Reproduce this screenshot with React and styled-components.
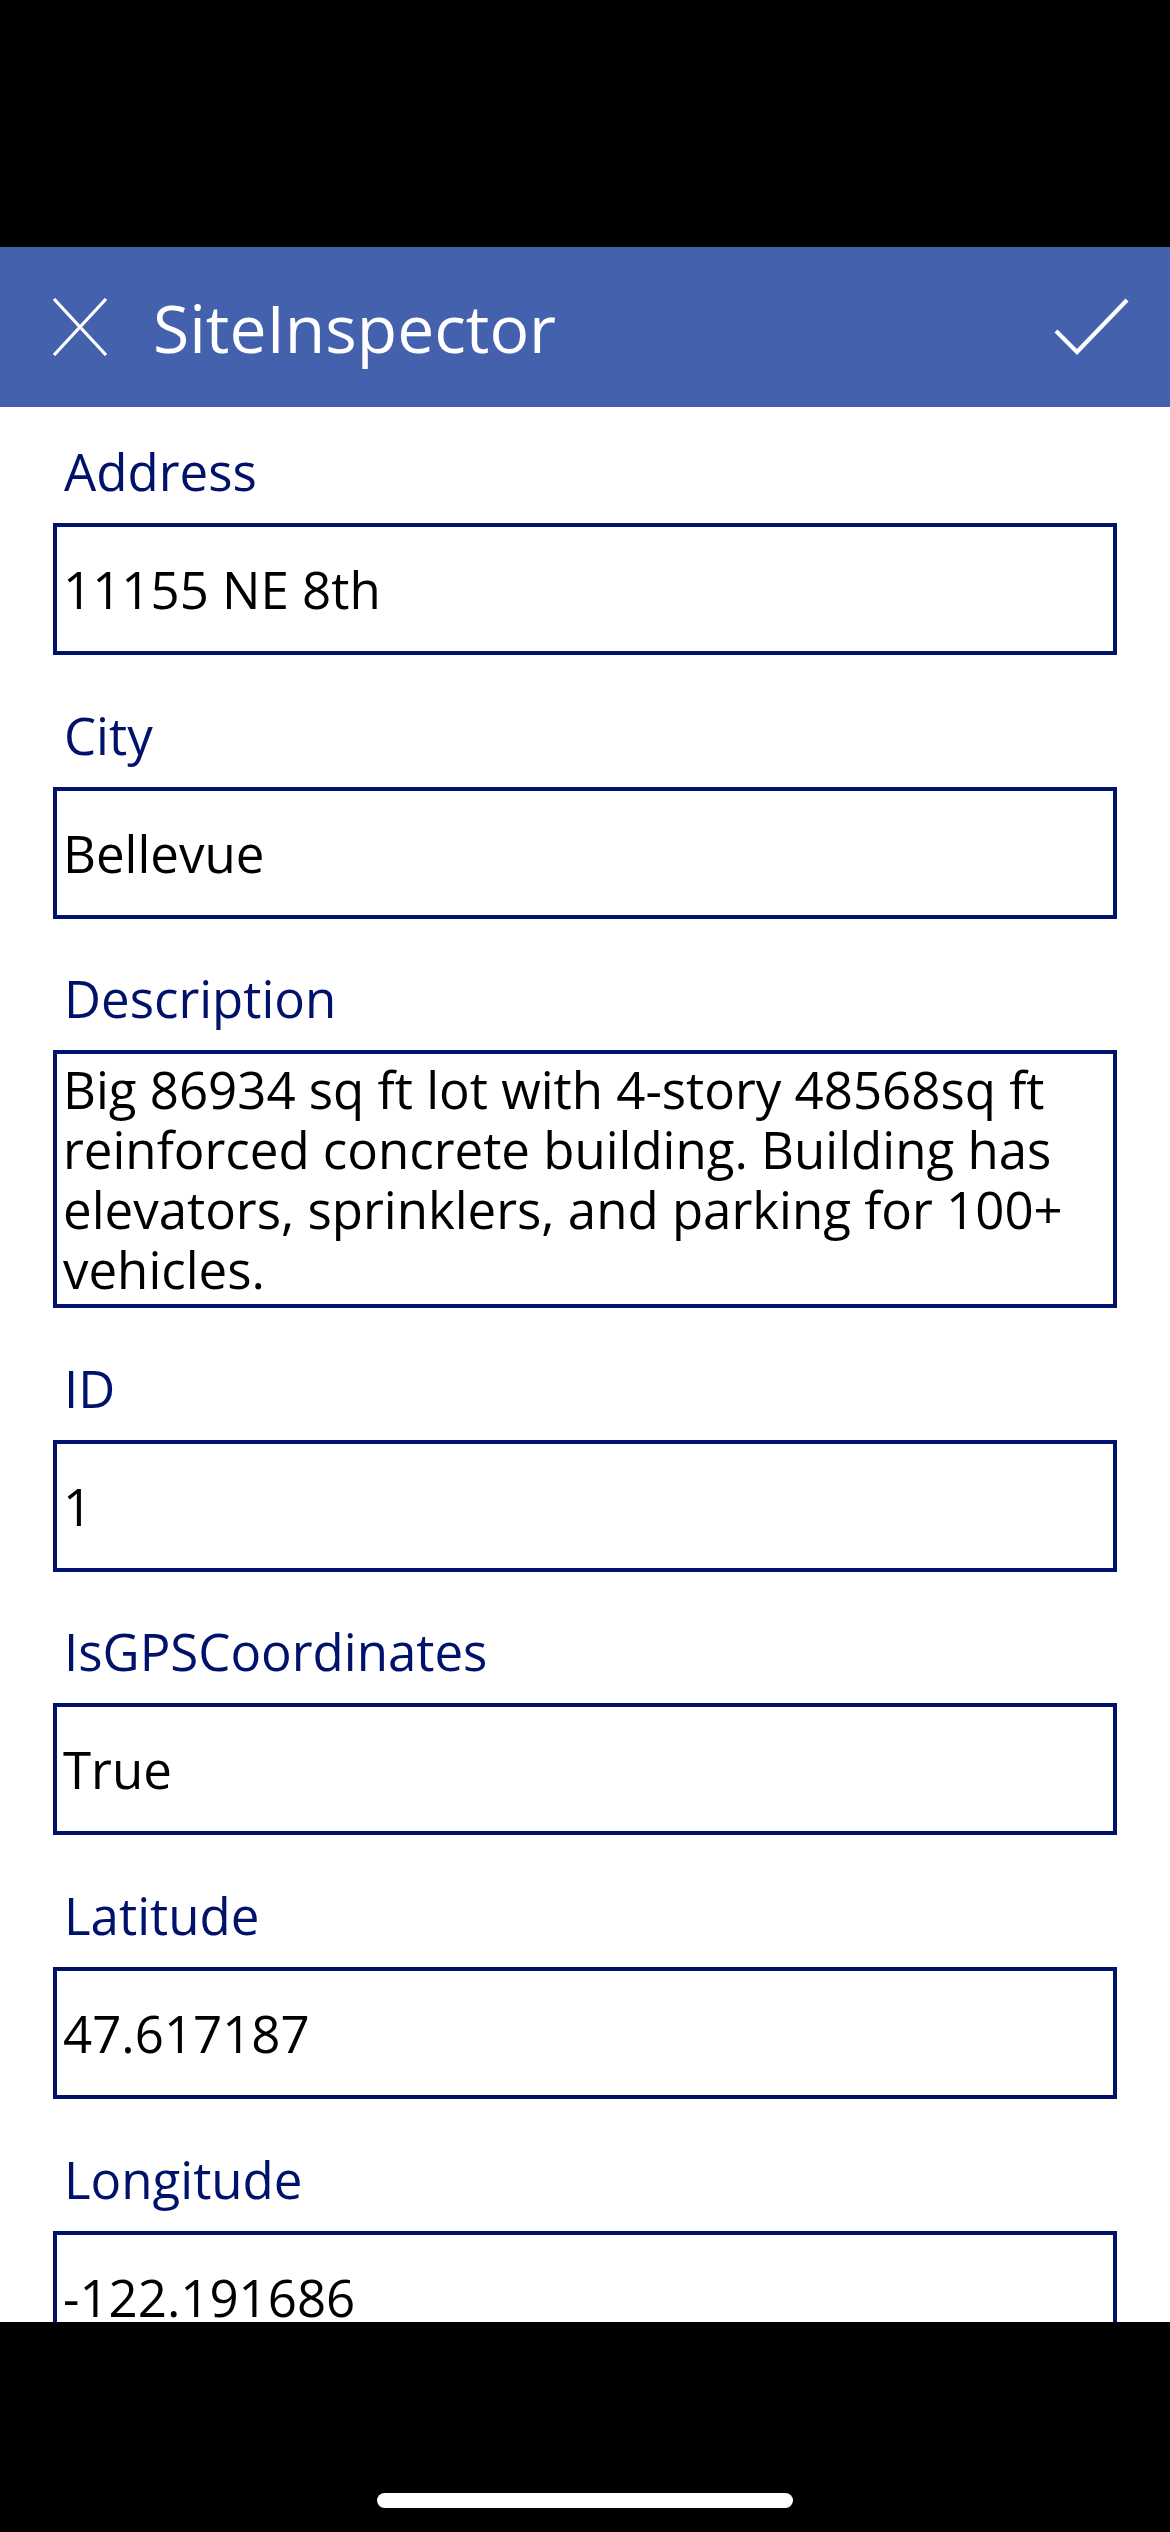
import React from "react";
import styled, { createGlobalStyle } from "styled-components";

const GlobalStyle = createGlobalStyle`
  html, body {
    margin: 0;
    padding: 0;
    background: #000;
  }
  body {
    font-family: "Open Sans", "Noto Sans", "Liberation Sans", sans-serif;
  }
  * { box-sizing: border-box; }
`;

const NAVY = "#00126B";

const Phone = styled.div`
  width: 1170px;
  height: 2532px;
  display: flex;
  flex-direction: column;
  background: #fff;
  overflow: hidden;
`;

const StatusBar = styled.div`
  height: 247px;
  flex: none;
  background: #000;
`;

const Header = styled.header`
  height: 160px;
  flex: none;
  background: #4361ad;
  display: flex;
  align-items: center;
  padding: 0 40px 0 52px;
`;

const IconButton = styled.button`
  border: 0;
  background: transparent;
  padding: 0;
  display: flex;
  align-items: center;
  justify-content: center;
  cursor: pointer;
`;

const Title = styled.h1`
  margin: 0 0 0 45px;
  flex: 1;
  font-size: 66px;
  font-weight: 400;
  color: #fff;
  line-height: 1;
  letter-spacing: 0;
`;

const Content = styled.main`
  flex: 1;
  min-height: 0;
  overflow: hidden;
  padding: 32px 53px 0;
  display: flex;
  flex-direction: column;
  gap: 47.6px;
`;

const Field = styled.div`
  display: flex;
  flex-direction: column;
  flex: none;
`;

const Label = styled.label`
  font-size: 51px;
  line-height: 64px;
  height: 64px;
  color: ${NAVY};
  padding-left: 11px;
  margin-bottom: 20px;
  white-space: nowrap;
`;

const Input = styled.input`
  width: 100%;
  height: 132px;
  border: 4px solid ${NAVY};
  border-radius: 0;
  padding: 0 6px;
  margin: 0;
  font-family: inherit;
  font-size: 51px;
  color: #000;
  background: #fff;
  outline: none;
`;

const TextArea = styled.textarea`
  width: 100%;
  height: 258px;
  border: 4px solid ${NAVY};
  border-radius: 0;
  padding: 5px 6px 0;
  margin: 0;
  font-family: inherit;
  font-size: 51px;
  line-height: 60px;
  color: #000;
  background: #fff;
  resize: none;
  overflow: hidden;
  outline: none;
  display: block;
`;

const BottomBar = styled.div`
  height: 210px;
  flex: none;
  background: #000;
  display: flex;
  justify-content: center;
  align-items: flex-end;
  padding-bottom: 24px;
`;

const HomeIndicator = styled.div`
  width: 416px;
  height: 15px;
  border-radius: 8px;
  background: #fff;
`;

const CloseIcon = () => (
  <svg width="56" height="58" viewBox="0 0 56 58" fill="none">
    <path d="M2 1 L54 57 M54 1 L2 57" stroke="#fff" strokeWidth="3.2" />
  </svg>
);

const CheckIcon = () => (
  <svg width="76" height="58" viewBox="0 0 76 58" fill="none">
    <path d="M2 33 L23 54 L73 2" stroke="#fff" strokeWidth="4.2" />
  </svg>
);

const fields = [
  { label: "Address", value: "11155 NE 8th" },
  { label: "City", value: "Bellevue" },
  {
    label: "Description",
    value:
      "Big 86934 sq ft lot with 4-story 48568sq ft reinforced concrete building. Building has elevators, sprinklers, and parking for 100+ vehicles.",
    multiline: true,
  },
  { label: "ID", value: "1" },
  { label: "IsGPSCoordinates", value: "True" },
  { label: "Latitude", value: "47.617187" },
  { label: "Longitude", value: "-122.191686" },
];

export default function App() {
  return (
    <>
      <GlobalStyle />
      <Phone>
        <StatusBar />
        <Header>
          <IconButton aria-label="Close">
            <CloseIcon />
          </IconButton>
          <Title>SiteInspector</Title>
          <IconButton aria-label="Submit">
            <CheckIcon />
          </IconButton>
        </Header>
        <Content>
          {fields.map((f) => (
            <Field key={f.label}>
              <Label>{f.label}</Label>
              {f.multiline ? (
                <TextArea readOnly defaultValue={f.value} rows={4} />
              ) : (
                <Input readOnly defaultValue={f.value} />
              )}
            </Field>
          ))}
        </Content>
        <BottomBar>
          <HomeIndicator />
        </BottomBar>
      </Phone>
    </>
  );
}
